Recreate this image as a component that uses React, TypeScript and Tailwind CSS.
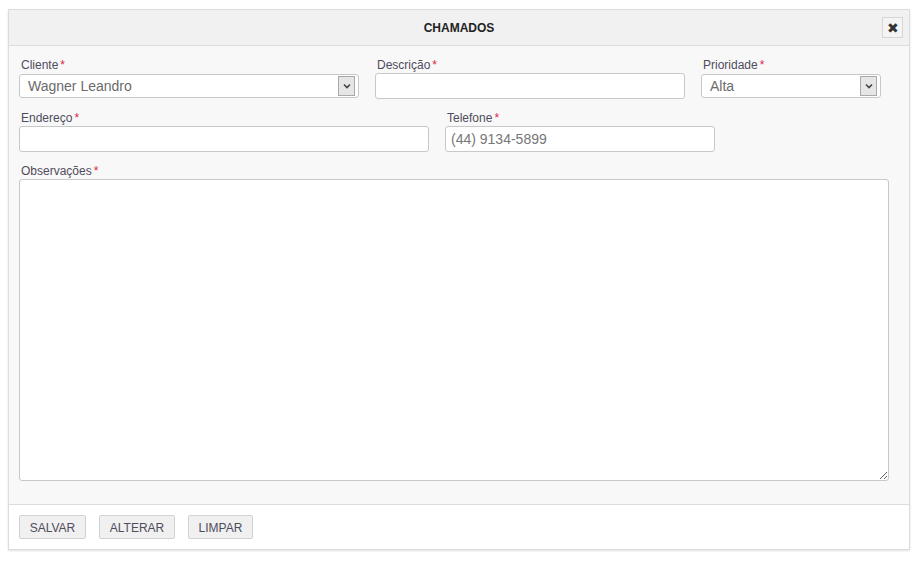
import * as React from "react"

function Label({ text }: { text: string }) {
  return (
    <div className="h-[17px] pl-[2px] pt-[2px] text-[12px] leading-[15px] text-[#4f4c5c]">
      {text}
      <span className="ml-[2px] text-[#e0244d]">*</span>
    </div>
  )
}

function FakeSelect({ value, width }: { value: string; width: string }) {
  return (
    <div className={`mt-px flex h-[24px] items-center justify-between rounded-[3px] border border-[#c8c8c8] bg-white pl-[8px] pr-[3px] ${width}`}>
      <span className="text-[14px] text-[#6b6b6b]">{value}</span>
      <span className="flex h-[20px] w-[17px] items-center justify-center border border-[#a9a9a9] bg-[#e6e6e6]">
        <svg width="8" height="6" viewBox="0 0 8 6">
          <path d="M1 1.5 L4 4.5 L7 1.5" fill="none" stroke="#444" strokeWidth="1.6" />
        </svg>
      </span>
    </div>
  )
}

export default function App() {
  return (
    <div className="min-h-[568px] bg-white pl-[8px] pt-[9px]" style={{ fontFamily: '"Liberation Sans", Arial, sans-serif' }}>
      <div className="w-[902px] border border-[#dcdcdc] shadow-[0_1px_2px_rgba(0,0,0,0.12)]">
        {/* header */}
        <div className="relative flex h-[36px] items-center justify-center border-b border-[#dcdcdc] bg-[#f1f1f1]">
          <span className="text-[12px] font-bold text-[#222]">CHAMADOS</span>
          <button className="absolute right-[6px] top-[7px] flex h-[21px] w-[21px] items-center justify-center border border-[#d6d6d6] bg-[#f4f4f4] text-[14px] leading-none text-[#333]">
            ✖
          </button>
        </div>

        {/* body */}
        <div className="bg-[#f8f8f8] px-[10px] pb-[23px] pt-[10px]">
          <div className="flex gap-[16px]">
            <div>
              <Label text="Cliente" />
              <FakeSelect value="Wagner Leandro" width="w-[340px]" />
            </div>
            <div>
              <Label text="Descrição" />
              <input className="block h-[26px] w-[310px] rounded-[3px] border border-[#c8c8c8] bg-white px-2 text-[14px] outline-none" />
            </div>
            <div>
              <Label text="Prioridade" />
              <FakeSelect value="Alta" width="w-[180px]" />
            </div>
          </div>

          <div className="mt-[10px] flex gap-[16px]">
            <div>
              <Label text="Endereço" />
              <input className="block h-[26px] w-[410px] rounded-[3px] border border-[#c8c8c8] bg-white px-2 text-[14px] outline-none" />
            </div>
            <div>
              <Label text="Telefone" />
              <input
                placeholder="(44) 9134-5899"
                className="block h-[26px] w-[270px] rounded-[3px] border border-[#c8c8c8] bg-white px-[5px] text-[14px] text-[#6b6b6b] outline-none placeholder:text-[#777]"
              />
            </div>
          </div>

          <div className="mt-[10px]">
            <Label text="Observações" />
            <textarea className="block h-[302px] w-[870px] rounded-[3px] border border-[#c8c8c8] bg-white p-2 text-[14px] outline-none" />
          </div>
        </div>

        {/* footer */}
        <div className="flex gap-[13px] border-t border-[#dcdcdc] bg-white px-[10px] py-[10px]">
          <button className="h-[24px] w-[67px] rounded-[2px] border border-[#d2d2d2] bg-[#f0f0f0] pt-px text-[12px] text-[#4f4c5c]">SALVAR</button>
          <button className="h-[24px] w-[76px] rounded-[2px] border border-[#d2d2d2] bg-[#f0f0f0] pt-px text-[12px] text-[#4f4c5c]">ALTERAR</button>
          <button className="h-[24px] w-[65px] rounded-[2px] border border-[#d2d2d2] bg-[#f0f0f0] pt-px text-[12px] text-[#4f4c5c]">LIMPAR</button>
        </div>
      </div>
    </div>
  )
}
